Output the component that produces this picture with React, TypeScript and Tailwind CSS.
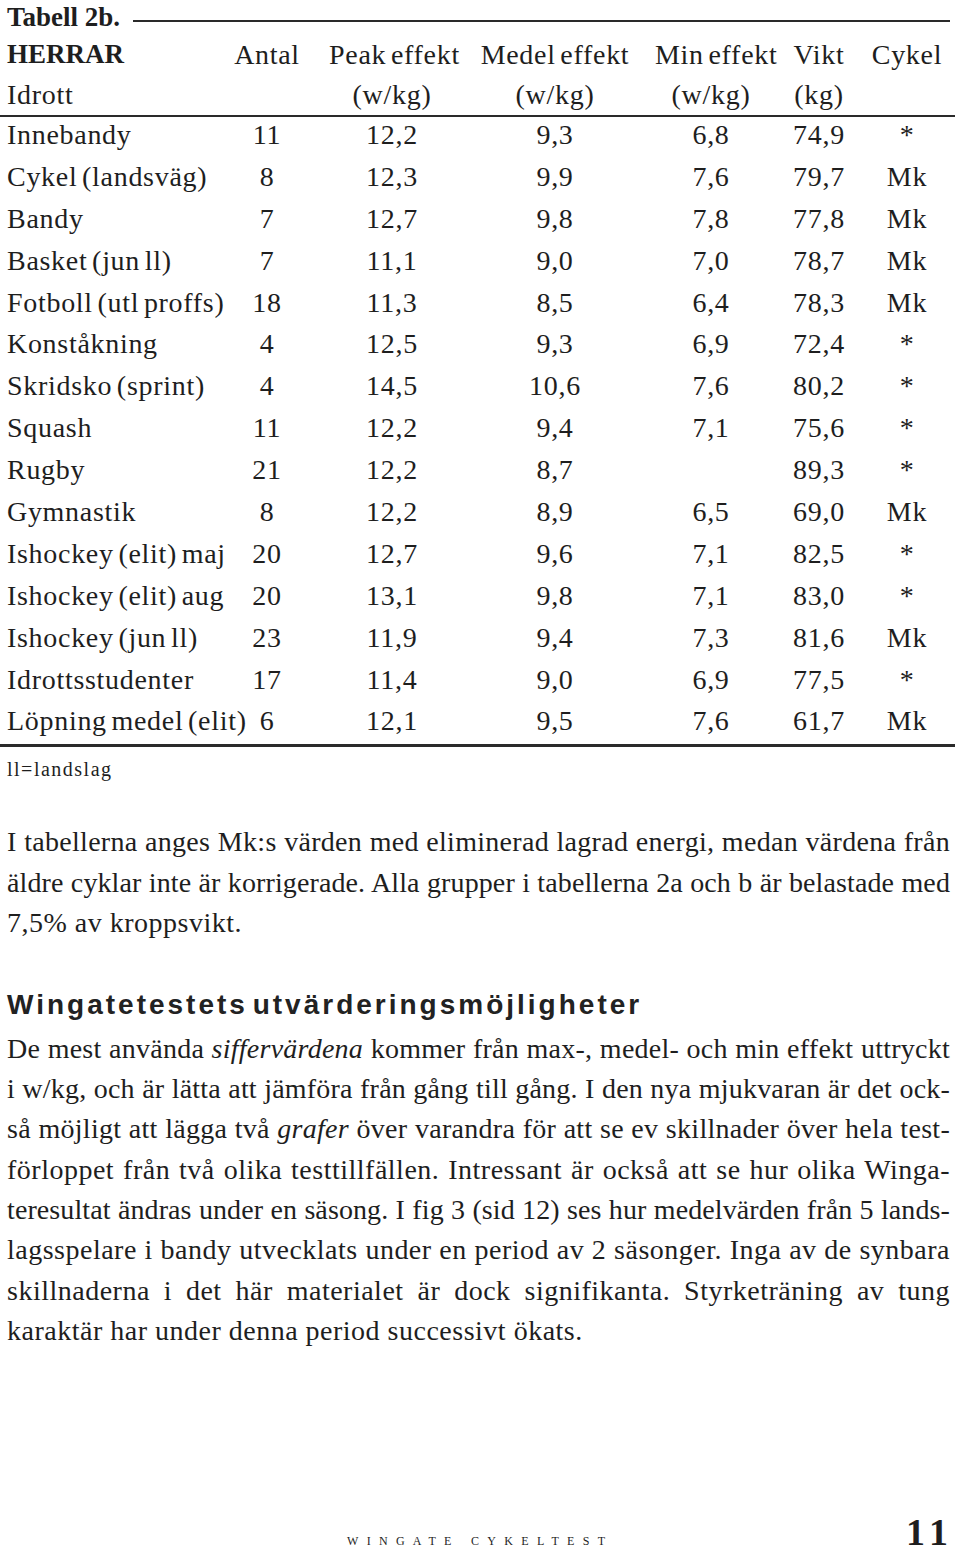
import React, { useLayoutEffect, useRef, useState } from "react";

type LineProps = { children: React.ReactNode; last?: boolean; base?: number };

function JLine({ children, last = false, base = 0.5 }: LineProps) {
  const outer = useRef<HTMLDivElement>(null);
  const inner = useRef<HTMLSpanElement>(null);
  const [ls, setLs] = useState<number | null>(null);
  useLayoutEffect(() => {
    const o = outer.current;
    const i = inner.current;
    if (!o || !i) return;
    const natural = i.getBoundingClientRect().width;
    const W = o.clientWidth;
    const n = (i.textContent || "").length;
    let s = base;
    if (!last) s = Math.min(base, (W - natural - 3) / n);
    setLs(s);
  }, [last, base]);
  const justify = ls !== null && !last;
  return (
    <div
      ref={outer}
      className={
        justify
          ? "h-[40.4px] leading-[40.4px] text-justify [text-align-last:justify]"
          : "h-[40.4px] leading-[40.4px] whitespace-nowrap"
      }
    >
      <span ref={inner} style={{ letterSpacing: ls === null ? 0 : ls }}>
        {children}
      </span>
    </div>
  );
}

const rows: string[][] = [
  ["Innebandy", "11", "12,2", "9,3", "6,8", "74,9", "*"],
  ["Cykel (landsväg)", "8", "12,3", "9,9", "7,6", "79,7", "Mk"],
  ["Bandy", "7", "12,7", "9,8", "7,8", "77,8", "Mk"],
  ["Basket (jun ll)", "7", "11,1", "9,0", "7,0", "78,7", "Mk"],
  ["Fotboll (utl proffs)", "18", "11,3", "8,5", "6,4", "78,3", "Mk"],
  ["Konståkning", "4", "12,5", "9,3", "6,9", "72,4", "*"],
  ["Skridsko (sprint)", "4", "14,5", "10,6", "7,6", "80,2", "*"],
  ["Squash", "11", "12,2", "9,4", "7,1", "75,6", "*"],
  ["Rugby", "21", "12,2", "8,7", "", "89,3", "*"],
  ["Gymnastik", "8", "12,2", "8,9", "6,5", "69,0", "Mk"],
  ["Ishockey (elit) maj", "20", "12,7", "9,6", "7,1", "82,5", "*"],
  ["Ishockey (elit) aug", "20", "13,1", "9,8", "7,1", "83,0", "*"],
  ["Ishockey (jun ll)", "23", "11,9", "9,4", "7,3", "81,6", "Mk"],
  ["Idrottsstudenter", "17", "11,4", "9,0", "6,9", "77,5", "*"],
  ["Löpning medel (elit)", "6", "12,1", "9,5", "7,6", "61,7", "Mk"],
];

const gridCols =
  "grid grid-cols-[198px_124px_126px_200px_112px_104px_72px] pl-[7px]";

export default function App() {
  return (
    <div className="w-[960px] h-[1555px] bg-white text-[#1e1e1e] font-['Liberation_Serif','Times_New_Roman',serif] flex flex-col overflow-hidden">
      {/* Title row */}
      <div className="h-[34px] flex items-center pl-[7px] pr-[10px]">
        <span className="font-bold text-[27px] leading-[34px] whitespace-nowrap">
          Tabell 2b.
        </span>
        <div className="flex-1 ml-[13px] mt-[8px] h-[2px] bg-[#2a2a2a]" />
      </div>

      {/* Header rows */}
      <div className={`${gridCols} h-[41px] items-center text-[28px] leading-[41px] tracking-[0.7px] [word-spacing:-3px] whitespace-nowrap`}>
        <div className="font-bold tracking-normal text-[27px]">HERRAR</div>
        <div className="text-center">Antal</div>
        <div className="text-center">Peak effekt</div>
        <div className="text-center">Medel effekt</div>
        <div className="text-center">Min effekt</div>
        <div className="text-center">Vikt</div>
        <div className="text-center">Cykel</div>
      </div>
      <div className={`${gridCols} h-[40px] items-center text-[28px] leading-[40px] tracking-[0.7px] whitespace-nowrap`}>
        <div>Idrott</div>
        <div />
        <div className="text-center">(w/kg)</div>
        <div className="text-center">(w/kg)</div>
        <div className="text-center">(w/kg)</div>
        <div className="text-center">(kg)</div>
        <div />
      </div>
      <div className="h-[2px] bg-[#2a2a2a] mr-[5px]" />

      {/* Data rows */}
      <div className="-mt-[3px] flex flex-col">
        {rows.map((r) => (
          <div
            key={r[0]}
            className={`${gridCols} h-[41.9px] items-center text-[28px] leading-[41.9px] tracking-[0.7px] [word-spacing:-3px] whitespace-nowrap`}
          >
            <div>{r[0]}</div>
            <div className="text-center">{r[1]}</div>
            <div className="text-center">{r[2]}</div>
            <div className="text-center">{r[3]}</div>
            <div className="text-center">{r[4]}</div>
            <div className="text-center">{r[5]}</div>
            <div className="text-center">{r[6]}</div>
          </div>
        ))}
      </div>
      <div className="mt-[2px] h-[3px] bg-[#2a2a2a] mr-[5px]" />

      <div className="h-[44px] leading-[44px] pl-[7px] text-[20px] tracking-[1.5px]">
        ll=landslag
      </div>

      {/* Paragraph 1 */}
      <div className="mt-[31px] pl-[7px] pr-[10px] text-[28px]">
        <JLine>I tabellerna anges Mk:s värden med eliminerad lagrad energi, medan värdena från</JLine>
        <JLine>äldre cyklar inte är korrigerade. Alla grupper i tabellerna 2a och b är belastade med</JLine>
        <JLine last>7,5% av kroppsvikt.</JLine>
      </div>

      {/* Heading */}
      <div className="mt-[39px] h-[44px] leading-[44px] pl-[7px] font-['Liberation_Sans','Arial',sans-serif] font-bold text-[28px] tracking-[3px] [word-spacing:-6px] text-[#222]">
        Wingatetestets utvärderingsmöjligheter
      </div>

      {/* Paragraph 2 */}
      <div className="mt-[2px] pl-[7px] pr-[10px] text-[28px]">
        <JLine>
          De mest använda <i>siffervärdena</i> kommer från max-, medel- och min effekt uttryckt
        </JLine>
        <JLine>i w/kg, och är lätta att jämföra från gång till gång. I den nya mjukvaran är det ock-</JLine>
        <JLine>
          så möjligt att lägga två <i>grafer</i> över varandra för att se ev skillnader över hela test-
        </JLine>
        <JLine>förloppet från två olika testtillfällen. Intressant är också att se hur olika Winga-</JLine>
        <JLine>teresultat ändras under en säsong. I fig 3 (sid 12) ses hur medelvärden från 5 lands-</JLine>
        <JLine>lagsspelare i bandy utvecklats under en period av 2 säsonger. Inga av de synbara</JLine>
        <JLine>skillnaderna i det här materialet är dock signifikanta. Styrketräning av tung</JLine>
        <JLine last>karaktär har under denna period successivt ökats.</JLine>
      </div>

      {/* Footer */}
      <div className="mt-auto h-[50px] flex items-baseline pl-[347px] pr-[6px] pt-[12px]">
        <span className="text-[12px] tracking-[8.3px] uppercase whitespace-nowrap">
          WINGATE CYKELTEST
        </span>
        <span className="ml-auto font-bold text-[38px] leading-[30px] tracking-[6px]">11</span>
      </div>
    </div>
  );
}
